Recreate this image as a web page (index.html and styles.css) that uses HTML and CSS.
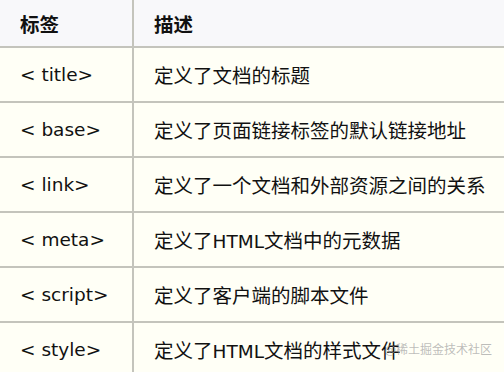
FILE: index.html
```html
<!DOCTYPE html>
<html>
<head>
<meta charset="utf-8">
<link rel="stylesheet" href="styles.css">
</head>
<body>
<div class="wrap">
<table class="tags">
<thead>
<tr><th class="c1">标签</th><th class="c2">描述</th></tr>
</thead>
<tbody>
<tr><td class="c1">&lt; title&gt;</td><td class="c2">定义了文档的标题</td></tr>
<tr><td class="c1">&lt; base&gt;</td><td class="c2">定义了页面链接标签的默认链接地址</td></tr>
<tr><td class="c1">&lt; link&gt;</td><td class="c2">定义了一个文档和外部资源之间的关系</td></tr>
<tr><td class="c1">&lt; meta&gt;</td><td class="c2">定义了<span class="lat">HTML</span>文档中的元数据</td></tr>
<tr><td class="c1">&lt; script&gt;</td><td class="c2">定义了客户端的脚本文件</td></tr>
<tr><td class="c1">&lt; style&gt;</td><td class="c2">定义了<span class="lat">HTML</span>文档的样式文件</td></tr>
</tbody>
</table>
<div class="watermark">@稀土掘金技术社区</div>
</div>
</body>
</html>
```
FILE: styles.css
```css
html, body {
  margin: 0;
  padding: 0;
  background: #fffff6;
  overflow: hidden;
}
.wrap {
  position: relative;
  width: 504px;
  height: 372px;
  overflow: hidden;
}
.tags {
  border-collapse: collapse;
  width: 504px;
  font-family: "Noto Sans CJK SC", sans-serif;
  font-size: 19.5px;
  color: #111;
}
.tags th, .tags td {
  padding: 0 0 0 20px;
  text-align: left;
  vertical-align: middle;
  border: 2px solid #c4c4bc;
}
.tags tr > :first-child { border-left: none; }
.tags tr > :last-child { border-right: none; }
.tags thead th {
  border-top: none;
  height: 46px;
  background: #f8f8fa;
  font-weight: bold;
}
.tags tbody td {
  height: 53px;
  background: #fffff6;
}
.tags tbody .c1, .lat {
  font-family: "DejaVu Sans", sans-serif;
  font-size: 18.5px;
}
.tags .c1 { width: 112px; }
.watermark {
  position: absolute;
  right: 12px;
  bottom: 15px;
  font-family: "Noto Sans CJK SC", sans-serif;
  font-size: 12px;
  color: rgba(160, 160, 160, 0.7);
}
```
